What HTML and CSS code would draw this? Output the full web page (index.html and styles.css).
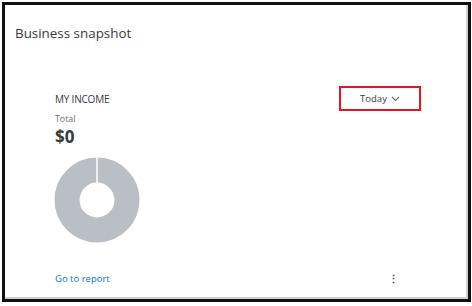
FILE: index.html
```html
<!DOCTYPE html>
<html>
<head>
<meta charset="utf-8">
<link rel="stylesheet" href="styles.css">
</head>
<body>
<div class="frame">
  <div class="card">
    <h1 class="title">Business snapshot</h1>
    <div class="widget">
      <div class="widget-head">
        <div class="left">
          <div class="label">MY INCOME</div>
          <div class="sub">Total</div>
          <div class="amount">$0</div>
        </div>
        <div class="period">Today
          <svg class="chev" width="9" height="6" viewBox="0 0 9 6"><path d="M1 1l3.5 3.5L8 1" fill="none" stroke="#6b6c72" stroke-width="1.1"/></svg>
        </div>
      </div>
      <svg class="donut" width="86" height="86" viewBox="0 0 86 86">
        <circle cx="43" cy="43" r="30" fill="none" stroke="#babec5" stroke-width="25"/>
        <line x1="43" y1="0" x2="43" y2="26" stroke="#fff" stroke-width="1.5"/>
      </svg>
      <div class="widget-foot">
        <a class="report">Go to report</a>
        <span class="kebab">⋮</span>
      </div>
    </div>
  </div>
</div>
</body>
</html>
```
FILE: styles.css
```css
html, body { margin: 0; padding: 0; background: #fff; }
body { font-family: "Open Sans", "Liberation Sans", sans-serif; color: #393a3d; }
.frame {
  margin: 2px 0 0 2px;
  width: 463px;
  height: 294px;
  border: 3px solid #111;
  box-shadow: inset -2px -2px 0 #d0d0d0;
}
.card { padding: 18px 0 0 10px; }
.title { margin: 0; font-size: 13.4px; font-weight: 400; line-height: 20px; color: #393a3d; }
.widget { margin: 50px 0 0 40px; width: 366px; }
.widget-head { display: flex; justify-content: space-between; align-items: flex-start; }
.label { font-size: 10px; line-height: 12px; letter-spacing: -0.2px; color: #393a3d; }
.sub { margin-top: 8px; font-size: 8.8px; line-height: 12px; color: #6b6c72; }
.amount { margin-top: 2px; font-size: 17px; font-weight: 700; line-height: 20px; color: #393a3d; }
.period {
  margin-top: -7px;
  width: 78px; height: 21px;
  border: 2px solid #e0171f;
  display: flex; align-items: center; justify-content: center; gap: 4px;
  font-size: 9.5px; color: #393a3d;
}
.chev { margin-top: 1px; }
.donut { display: block; margin: 10px 0 0 -1px; }
.widget-foot { margin-top: 28px; display: flex; justify-content: space-between; align-items: center; }
.report { font-size: 9.5px; color: #0077c5; }
.kebab { font-size: 11px; color: #555; margin-right: 22px; font-weight: 700; }
```
